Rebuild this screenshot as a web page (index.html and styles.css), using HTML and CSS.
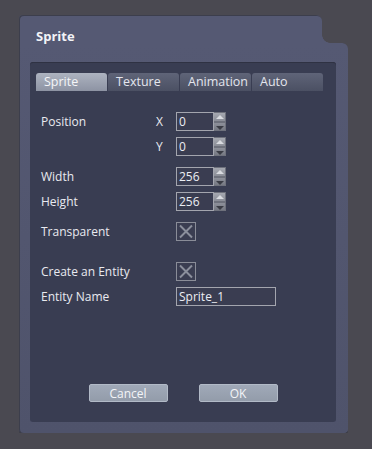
FILE: index.html
```html
<!DOCTYPE html>
<html>
  <head>
    <meta charset="utf-8">
    <title>Sprite</title>
    <link rel="stylesheet" href="styles.css">
  </head>
  <body>
    <div class="window">
      <div class="window-head"><h1>Sprite</h1></div>
      <div class="window-body">
        <div class="panel">
          <ul class="tabs">
            <li class="tab active">Sprite</li>
            <li class="tab">Texture</li>
            <li class="tab">Animation</li>
            <li class="tab">Auto</li>
          </ul>

          <!-- position -->
          <div class="row first">
            <span class="label">Position</span><span class="axis">X</span>
            <div class="spin"><input value="0"><div class="arrows"><span class="up"></span><span class="down"></span></div></div>
          </div>
          <div class="row">
            <span class="label"></span><span class="axis">Y</span>
            <div class="spin"><input value="0"><div class="arrows"><span class="up"></span><span class="down"></span></div></div>
          </div>

          <!-- size -->
          <div class="row gap">
            <span class="label wide">Width</span>
            <div class="spin"><input value="256"><div class="arrows"><span class="up"></span><span class="down"></span></div></div>
          </div>
          <div class="row">
            <span class="label wide">Height</span>
            <div class="spin"><input value="256"><div class="arrows"><span class="up"></span><span class="down"></span></div></div>
          </div>

          <div class="row gap">
            <span class="label wide">Transparent</span>
            <span class="check"><svg width="18" height="17" viewBox="0 0 18 17"><path d="M3 2.5 L15 14.5 M15 2.5 L3 14.5" stroke="#8b8f9c" stroke-width="2"/></svg></span>
          </div>

          <!-- entity -->
          <div class="row gap-big">
            <span class="label wide">Create an Entity</span>
            <span class="check"><svg width="18" height="17" viewBox="0 0 18 17"><path d="M3 2.5 L15 14.5 M15 2.5 L3 14.5" stroke="#8b8f9c" stroke-width="2"/></svg></span>
          </div>
          <div class="row">
            <span class="label wide">Entity Name</span>
            <input class="text" value="Sprite_1">
          </div>

          <div class="buttons">
            <button>Cancel</button>
            <button>OK</button>
          </div>
        </div>
      </div>
    </div>
  </body>
</html>
```

FILE: styles.css
```css
body { margin: 0; background: #4a4951; font-family: "Open Sans", "DejaVu Sans", sans-serif; font-size: 12px; color: #e9eaf0; }

.window { margin: 15px 0 0 19px; width: 329px; }
.window-head { position: relative; width: 303px; height: 28px; background: #555973;
  border-radius: 4px 6px 0 0; box-shadow: inset 1px 1px 0 #3c3e4c; }
.window-head::after { content: ""; position: absolute; right: -8px; bottom: 0; width: 8px; height: 8px;
  background: radial-gradient(circle at 100% 0, transparent 7.5px, #555973 8px); }
.window-head h1 { margin: 0; padding: 12px 0 0 17px; font-size: 13px; font-weight: bold; color: #f2f3f7; }
.window-body { height: 360px; padding: 19px 12px 11px 11px; background: linear-gradient(#555973, #4f536b);
  border-radius: 0 6px 4px 4px; box-shadow: inset 1px 0 0 #3c3e4c, 0 1px 0 #2e2f36; }

.panel { height: 360px; background: #393d52; border-radius: 3px; box-shadow: inset 0 1px 0 #2f3243;
  display: flex; flex-direction: column; }

.tabs { list-style: none; margin: 11px 0 0 6px; padding: 0; display: flex; gap: 1px; }
.tab { width: 71px; height: 18px; line-height: 18px; box-sizing: border-box; padding-left: 8px;
  border-radius: 3px 3px 0 0; background: linear-gradient(#5f6478, #4b5063); color: #e4e6ee; font-size: 12.5px; }
.tab.active { background: linear-gradient(#adb3c0, #8d93a3); color: #f4f5f8; }

.row { display: flex; align-items: center; height: 19px; margin-top: 6px; padding-left: 11px; }
.row.first { margin-top: 21px; }
.row.gap { margin-top: 11px; }
.row.gap-big { margin-top: 21px; }
.label { width: 115px; }
.label.wide { width: 135px; }
.axis { width: 20px; }

.spin { display: flex; height: 19px; }
.spin input, .text { box-sizing: border-box; height: 19px; margin: 0; padding: 0 2px; border: 1px solid #a3a5ae;
  background: #3a3d51; color: #eceef4; font: inherit; font-size: 12px; outline: none; }
.spin input { width: 38px; }
.text { width: 100px; }
.arrows { width: 12px; display: flex; flex-direction: column; }
.arrows span { flex: 1; position: relative; background: #8e929c; border: 1px solid #6e717c; border-left: 0; }
.arrows span::after { content: ""; position: absolute; left: 2px; border-left: 4px solid transparent; border-right: 4px solid transparent; }
.arrows .up { background: linear-gradient(#a6a9b1, #8a8d97); }
.arrows .up::after { top: 2px; border-bottom: 4px solid #d9dbe0; }
.arrows .down { background: linear-gradient(#8d909a, #767983); }
.arrows .down::after { top: 3px; border-top: 4px solid #3a3c45; }

.check { box-sizing: border-box; width: 20px; height: 19px; border: 1px solid #8a8d98; display: flex;
  align-items: center; justify-content: center; background: #3a3d51; }
.check svg { display: block; }

.buttons { margin-top: auto; margin-bottom: 20px; display: flex; justify-content: center; gap: 31px; }
.buttons button { width: 79px; height: 18px; padding: 0; border: 1px solid #b2bac7; border-radius: 2px;
  background: linear-gradient(#a0a9b8, #939caa); color: #f3f4f7; font: inherit; font-size: 12px; }
```
